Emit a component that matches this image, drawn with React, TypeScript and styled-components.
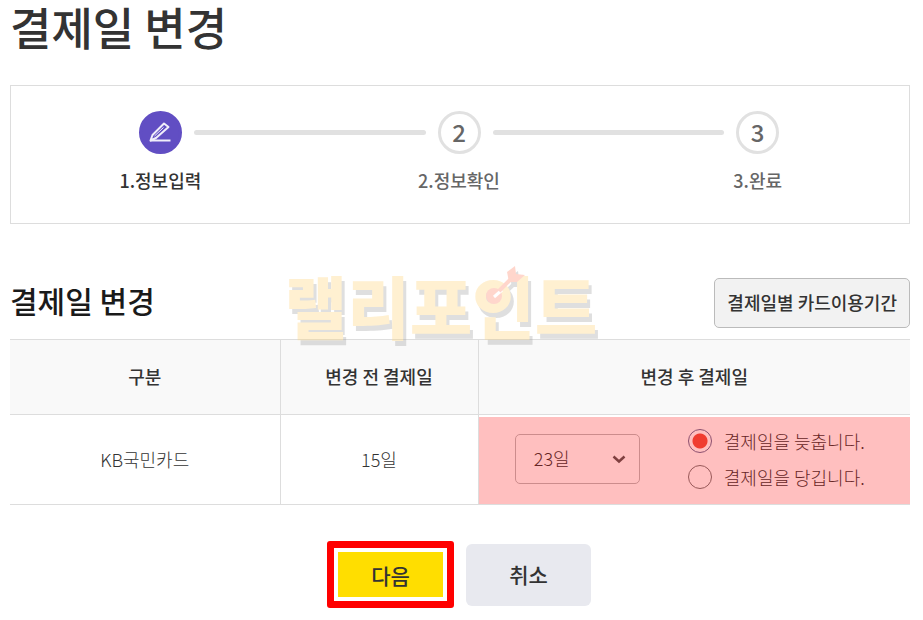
import React, { useState } from 'react';
import styled, { createGlobalStyle, css } from 'styled-components';

const GlobalStyle = createGlobalStyle`
  *, *::before, *::after { box-sizing: border-box; }
  body {
    margin: 0;
    background: #fff;
    color: #333;
    font-family: 'Noto Sans CJK KR', 'Noto Sans', sans-serif;
    font-size: 18px;
    line-height: 24px;
  }
  button, select, input { font: inherit; color: inherit; margin: 0; }
`;

const Page = styled.main`
  padding: 0 13px 12px 10px;
`;

const PageTitle = styled.h1`
  margin: 0 0 31px;
  font-size: 45px;
  line-height: 54px;
  font-weight: 500;
`;

const Steps = styled.ol`
  display: grid;
  grid-template-columns: repeat(3, 1fr);
  margin: 0;
  padding: 25px 2px 31px 0;
  list-style: none;
  border: 1px solid #ddd;
`;

const Step = styled.li`
  display: flex;
  flex-direction: column;
  gap: 14px;
`;

const StepTrack = styled.div`
  display: flex;
  align-items: center;
  gap: 12px;
`;

const Line = styled.span<{ $side: 'left' | 'right'; $hidden?: boolean }>`
  flex: 1;
  height: 5px;
  background: ${(p) => (p.$hidden ? 'transparent' : '#e1e1e1')};
  border-radius: ${(p) => (p.$side === 'left' ? '0 3px 3px 0' : '3px 0 0 3px')};
`;

const Circle = styled.span<{ $active?: boolean }>`
  display: flex;
  align-items: center;
  justify-content: center;
  width: 43px;
  height: 43px;
  padding-bottom: 2px;
  border-radius: 50%;
  border: 3px solid ${(p) => (p.$active ? '#614ec3' : '#e1e1e1')};
  background: ${(p) => (p.$active ? '#614ec3' : '#fff')};
  color: #666;
  font-size: 24px;
  font-weight: 500;
`;

const StepLabel = styled.span<{ $active?: boolean }>`
  text-align: center;
  font-weight: 500;
  color: ${(p) => (p.$active ? '#333' : '#666')};
`;

const Section = styled.section`
  position: relative;
  margin-top: 54px;
`;

const SectionHead = styled.div`
  display: flex;
  align-items: center;
  justify-content: space-between;
  margin-bottom: 11px;
`;

const SectionTitle = styled.h2`
  margin: 0;
  padding-bottom: 6px;
  font-size: 30px;
  line-height: 40px;
  font-weight: 500;
  color: #1a1a1a;
`;

const PeriodButton = styled.button`
  height: 50px;
  padding: 0 12px 2px;
  border: 1px solid #bbb;
  border-radius: 5px;
  background: #f2f2f2;
  font-weight: 500;
`;

const Watermark = styled.div`
  position: absolute;
  top: -17px;
  left: 0;
  right: 0;
  display: flex;
  justify-content: center;
  padding-right: 38px;
  opacity: 0.35;
  pointer-events: none;
  user-select: none;
`;

const WatermarkText = styled.span`
  position: relative;
  font-size: 68px;
  line-height: 88px;
  font-weight: 900;
  color: #ffd57e;
  filter: drop-shadow(3px 5px 0 #a4a4a4);
`;

const Dart = styled.svg`
  position: absolute;
  top: 5px;
  left: 198px;
  width: 42px;
  height: 42px;
`;

const Table = styled.table`
  width: 100%;
  table-layout: fixed;
  border-collapse: collapse;
  text-align: center;
`;

const edge = css`
  border: 1px solid #ddd;
  &:first-child { border-left: 0; }
  &:last-child { border-right: 0; }
`;

const HeadCell = styled.th<{ $width: string }>`
  ${edge}
  width: ${(p) => p.$width};
  height: 75px;
  padding: 0 0 2px;
  background: #f9f9f9;
  font-weight: 500;
`;

const Cell = styled.td`
  ${edge}
  height: 90px;
  padding: 0 0 2px;
  font-weight: 300;
`;

const MarkedCell = styled(Cell)`
  position: relative;
  &::after {
    content: '';
    position: absolute;
    inset: 2px 0 0 0;
    background: rgba(255, 0, 0, 0.25);
    pointer-events: none;
  }
`;

const Choices = styled.div`
  display: flex;
  align-items: center;
  justify-content: center;
  gap: 48px;
  padding-right: 9px;
`;

const SelectBox = styled.div`
  display: grid;
  align-items: center;
  width: 125px;
  > * { grid-area: 1 / 1; }
  svg { justify-self: end; margin-right: 14px; pointer-events: none; }
`;

const DaySelect = styled.select`
  appearance: none;
  width: 100%;
  height: 50px;
  padding: 0 36px 2px 18px;
  border: 1px solid #bbb;
  border-radius: 5px;
  background: transparent;
  font-weight: 300;
`;

const RadioGroup = styled.div`
  display: flex;
  flex-direction: column;
  gap: 12px;
`;

const RadioLabel = styled.label`
  display: flex;
  align-items: center;
  gap: 12px;
  white-space: nowrap;
`;

const Radio = styled.input`
  appearance: none;
  width: 24px;
  height: 24px;
  border: 1px solid #767676;
  border-radius: 50%;
  background: #fff;
  &:checked {
    border-color: #666c95;
    background: radial-gradient(circle, #eb5140 7px, #fff 8px);
  }
`;

const Actions = styled.div`
  display: flex;
  align-items: center;
  justify-content: center;
  gap: 12px;
  margin-top: 36px;
  padding-right: 2px;
`;

const ActionButton = styled.button`
  width: 125px;
  height: 62px;
  padding: 0 0 2px;
  border: 0;
  border-radius: 6px;
  background: #e8e9ef;
  font-size: 21px;
  font-weight: 500;
`;

const NextButton = styled(ActionButton)`
  width: 127px;
  height: 67px;
  padding: 4px;
  border: 7px solid #f00;
  border-radius: 3px;
  background: linear-gradient(#ffde00, #ffde00) content-box, #fff;
`;

const PencilIcon = () => (
  <svg width="24" height="24" viewBox="0 0 24 24" fill="none" stroke="#f0eefa" strokeWidth="2" aria-hidden="true">
    <path d="M2.500 20.500 4.500 15 16 3.500 20.500 7 8 18Z" strokeLinejoin="round" />
    <path d="m6.500 16 9-8.500" strokeWidth="1" />
    <path d="M2 20.500h20.500" />
  </svg>
);

const steps = ['정보입력', '정보확인', '완료'];
const days = ['23일', '15일', '25일'];

export default function App() {
  const [day, setDay] = useState(days[0]);
  const [direction, setDirection] = useState('later');

  return (
    <>
      <GlobalStyle />
      <Page>
        <PageTitle>결제일 변경</PageTitle>

        <Steps>
          {steps.map((name, i) => (
            <Step key={name} aria-current={i === 0 ? 'step' : undefined}>
              <StepTrack>
                <Line $side="left" $hidden={i === 0} />
                <Circle $active={i === 0}>{i === 0 ? <PencilIcon /> : i + 1}</Circle>
                <Line $side="right" $hidden={i === steps.length - 1} />
              </StepTrack>
              <StepLabel $active={i === 0}>{`${i + 1}.${name}`}</StepLabel>
            </Step>
          ))}
        </Steps>

        <Section>
          <SectionHead>
            <SectionTitle>결제일 변경</SectionTitle>
            <PeriodButton type="button">결제일별 카드이용기간</PeriodButton>
          </SectionHead>

          <Table>
            <thead>
              <tr>
                <HeadCell $width="30%">구분</HeadCell>
                <HeadCell $width="22%">변경 전 결제일</HeadCell>
                <HeadCell $width="48%">변경 후 결제일</HeadCell>
              </tr>
            </thead>
            <tbody>
              <tr>
                <Cell>KB국민카드</Cell>
                <Cell>15일</Cell>
                <MarkedCell>
                  <Choices>
                    <SelectBox>
                      <DaySelect
                        aria-label="변경 후 결제일"
                        value={day}
                        onChange={(e) => setDay(e.target.value)}
                      >
                        {days.map((d) => (
                          <option key={d}>{d}</option>
                        ))}
                      </DaySelect>
                      <svg width="14" height="10" viewBox="0 0 14 10" fill="none" stroke="#555" strokeWidth="2.500" aria-hidden="true">
                        <path d="m1.500 2.500 5.500 5 5.500-5" />
                      </svg>
                    </SelectBox>
                    <RadioGroup role="radiogroup">
                      <RadioLabel>
                        <Radio
                          type="radio"
                          name="direction"
                          checked={direction === 'later'}
                          onChange={() => setDirection('later')}
                        />
                        결제일을 늦춥니다.
                      </RadioLabel>
                      <RadioLabel>
                        <Radio
                          type="radio"
                          name="direction"
                          checked={direction === 'earlier'}
                          onChange={() => setDirection('earlier')}
                        />
                        결제일을 당깁니다.
                      </RadioLabel>
                    </RadioGroup>
                  </Choices>
                </MarkedCell>
              </tr>
            </tbody>
          </Table>

          <Watermark aria-hidden="true">
            <WatermarkText>
              랠리포인트
              <Dart viewBox="0 0 42 42">
                <circle cx="11" cy="30" r="8" fill="#ff8c70" />
                <path d="m11 31 8-7" stroke="#fff" strokeWidth="3" />
                <path d="m16 25 12-12" stroke="#ff8c70" strokeWidth="4" />
                <path d="m24 6 8-6 1 8 9 1-8 7h-8Z" fill="#ff8c70" />
              </Dart>
            </WatermarkText>
          </Watermark>
        </Section>

        <Actions>
          <NextButton type="button">다음</NextButton>
          <ActionButton type="button">취소</ActionButton>
        </Actions>
      </Page>
    </>
  );
}
